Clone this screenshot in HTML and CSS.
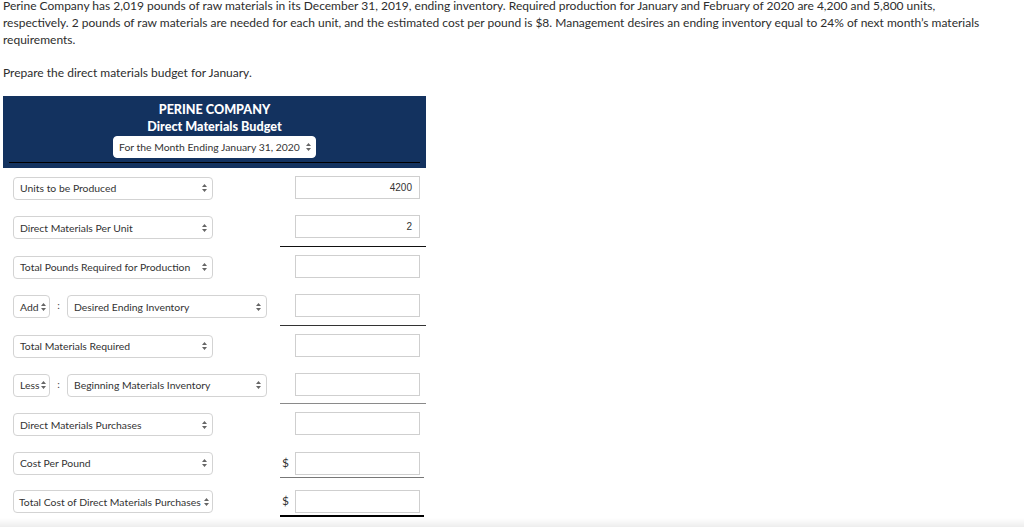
FILE: index.html
```html
<!DOCTYPE html>
<html>
<head>
<meta charset="utf-8">
<link rel="stylesheet" href="styles.css">
</head>
<body>
<div class="page">
  <p class="q">Perine Company has 2,019 pounds of raw materials in its December 31, 2019, ending inventory. Required production for January and February of 2020 are 4,200 and 5,800 units,<br>respectively. 2 pounds of raw materials are needed for each unit, and the estimated cost per pound is $8. Management desires an ending inventory equal to 24% of next month’s materials requirements.</p>
  <p class="q prep">Prepare the direct materials budget for January.</p>

  <div class="budget">
    <div class="head">
      <div class="title">PERINE COMPANY</div>
      <div class="title">Direct Materials Budget</div>
      <div class="sel period"><span class="txt">For the Month Ending January 31, 2020</span><span class="arr"><svg width="5" height="8" viewBox="0 0 5 8"><path d="M2.5 0L5 3H0Z M2.5 8L0 5H5Z" fill="#666"/></svg></span></div>
      <div class="headline"></div>
    </div>

    <div class="row">
      <div class="left"><div class="sel wide"><span class="txt">Units to be Produced</span><span class="arr"><svg width="5" height="8" viewBox="0 0 5 8"><path d="M2.5 0L5 3H0Z M2.5 8L0 5H5Z" fill="#666"/></svg></span></div></div>
      <div class="right"><div class="cell"><span class="cur"></span><div class="inp">4200</div></div></div>
    </div>
    <div class="row">
      <div class="left"><div class="sel wide"><span class="txt">Direct Materials Per Unit</span><span class="arr"><svg width="5" height="8" viewBox="0 0 5 8"><path d="M2.5 0L5 3H0Z M2.5 8L0 5H5Z" fill="#666"/></svg></span></div></div>
      <div class="right ul-dark"><div class="cell"><span class="cur"></span><div class="inp">2</div></div></div>
    </div>
    <div class="row">
      <div class="left"><div class="sel wide"><span class="txt">Total Pounds Required for Production</span><span class="arr"><svg width="5" height="8" viewBox="0 0 5 8"><path d="M2.5 0L5 3H0Z M2.5 8L0 5H5Z" fill="#666"/></svg></span></div></div>
      <div class="right"><div class="cell"><span class="cur"></span><div class="inp"></div></div></div>
    </div>
    <div class="row">
      <div class="left">
        <div class="sel small"><span class="txt">Add</span><span class="arr"><svg width="5" height="8" viewBox="0 0 5 8"><path d="M2.5 0L5 3H0Z M2.5 8L0 5H5Z" fill="#666"/></svg></span></div>
        <span class="colon">:</span>
        <div class="sel wide"><span class="txt">Desired Ending Inventory</span><span class="arr"><svg width="5" height="8" viewBox="0 0 5 8"><path d="M2.5 0L5 3H0Z M2.5 8L0 5H5Z" fill="#666"/></svg></span></div>
      </div>
      <div class="right ul-mid"><div class="cell"><span class="cur"></span><div class="inp"></div></div></div>
    </div>
    <div class="row">
      <div class="left"><div class="sel wide"><span class="txt">Total Materials Required</span><span class="arr"><svg width="5" height="8" viewBox="0 0 5 8"><path d="M2.5 0L5 3H0Z M2.5 8L0 5H5Z" fill="#666"/></svg></span></div></div>
      <div class="right"><div class="cell"><span class="cur"></span><div class="inp"></div></div></div>
    </div>
    <div class="row">
      <div class="left">
        <div class="sel small"><span class="txt">Less</span><span class="arr"><svg width="5" height="8" viewBox="0 0 5 8"><path d="M2.5 0L5 3H0Z M2.5 8L0 5H5Z" fill="#666"/></svg></span></div>
        <span class="colon">:</span>
        <div class="sel wide"><span class="txt">Beginning Materials Inventory</span><span class="arr"><svg width="5" height="8" viewBox="0 0 5 8"><path d="M2.5 0L5 3H0Z M2.5 8L0 5H5Z" fill="#666"/></svg></span></div>
      </div>
      <div class="right ul-light"><div class="cell"><span class="cur"></span><div class="inp"></div></div></div>
    </div>
    <div class="row">
      <div class="left"><div class="sel wide"><span class="txt">Direct Materials Purchases</span><span class="arr"><svg width="5" height="8" viewBox="0 0 5 8"><path d="M2.5 0L5 3H0Z M2.5 8L0 5H5Z" fill="#666"/></svg></span></div></div>
      <div class="right"><div class="cell"><span class="cur"></span><div class="inp"></div></div></div>
    </div>
    <div class="row up1">
      <div class="left"><div class="sel wide"><span class="txt">Cost Per Pound</span><span class="arr"><svg width="5" height="8" viewBox="0 0 5 8"><path d="M2.5 0L5 3H0Z M2.5 8L0 5H5Z" fill="#666"/></svg></span></div></div>
      <div class="right"><div class="cell money ul-grey"><span class="cur">$</span><div class="inp"></div></div></div>
    </div>
    <div class="row up2">
      <div class="left"><div class="sel wide tight"><span class="txt">Total Cost of Direct Materials Purchases</span><span class="arr"><svg width="5" height="8" viewBox="0 0 5 8"><path d="M2.5 0L5 3H0Z M2.5 8L0 5H5Z" fill="#666"/></svg></span></div></div>
      <div class="right"><div class="cell money ul-total"><span class="cur">$</span><div class="inp"></div></div></div>
    </div>
  </div>
</div>
<div class="shade"></div>
</body>
</html>
```

FILE: styles.css
```css
html, body {
  margin: 0;
  padding: 0;
  background: #fff;
}
body {
  font-family: Lato, "Open Sans", sans-serif;
  color: #2d2d2d;
}
.page {
  padding: 0 0 0 3px;
  margin-top: -2px;
}
.q {
  margin: 0;
  font-size: 12px;
  line-height: 16.8px;
  max-width: 1015px;
}
.prep {
  margin-top: 16.8px;
}
.budget {
  width: 423px;
  margin-top: 14px;
}
.head {
  background: #13325f;
  height: 72px;
  box-sizing: border-box;
  padding-top: 5px;
  display: flex;
  flex-direction: column;
  align-items: center;
}
.title {
  color: #fff;
  font-weight: 900;
  font-size: 12.6px;
  line-height: 17px;
}
.sel {
  display: flex;
  align-items: center;
  justify-content: space-between;
  box-sizing: border-box;
  height: 23px;
  background: #fff;
  border: 1px solid #d3d3d3;
  border-radius: 4px;
  font-size: 10.4px;
  color: #333;
  padding: 0 5px 0 6px;
  white-space: nowrap;
}
.sel .arr {
  display: flex;
  align-items: center;
}
.period {
  width: 203px;
  height: 22px;
  margin-top: 1px;
  border-color: #fff;
  padding: 0 4px 0 5px;
}
.headline {
  align-self: stretch;
  margin: 4px 6px 0 6px;
  border-top: 1px solid #000;
}
.row {
  height: 39.4px;
  display: flex;
  justify-content: space-between;
}
.left {
  display: flex;
  align-items: flex-start;
  padding: 9px 0 0 10px;
}
.up1 .left { padding-top: 8px; }
.up2 .left { padding-top: 7px; }
.wide {
  width: 200px;
}
.tight {
  padding-left: 5px;
  padding-right: 3px;
}
.small {
  width: 37px;
  padding-right: 3px;
}
.colon {
  width: 17px;
  text-align: center;
  font-size: 10.4px;
  line-height: 21px;
  color: #444;
}
.right {
  box-sizing: border-box;
  width: 146px;
  height: 39.4px;
  padding-top: 8px;
  border-bottom: 1px solid transparent;
}
.up1 .right { padding-top: 8px; }
.up2 .right { padding-top: 7px; }
.cell {
  display: flex;
  align-items: flex-start;
}
.money {
  padding-bottom: 2px;
  margin-right: 2px;
}
.cur {
  width: 15px;
  font-size: 12px;
  line-height: 21px;
  color: #333;
  padding-left: 2px;
  box-sizing: border-box;
}
.inp {
  box-sizing: border-box;
  width: 125px;
  height: 23px;
  border: 1px solid #cfcfcf;
  font-family: "Liberation Sans", Arial, sans-serif;
  font-size: 10px;
  color: #333;
  text-align: right;
  line-height: 21px;
  padding-right: 7px;
}
.ul-dark { border-bottom-color: #111; }
.ul-mid { border-bottom-color: #333; }
.ul-light { border-bottom-color: #8a8a8a; }
.ul-grey { border-bottom: 1px solid #777; }
.ul-total { border-bottom: 2px solid #000; }
.shade {
  position: fixed;
  left: 0;
  right: 0;
  bottom: 0;
  height: 9px;
  background: linear-gradient(to bottom, rgba(0,0,0,0), rgba(0,0,0,0.07));
  pointer-events: none;
}
```
